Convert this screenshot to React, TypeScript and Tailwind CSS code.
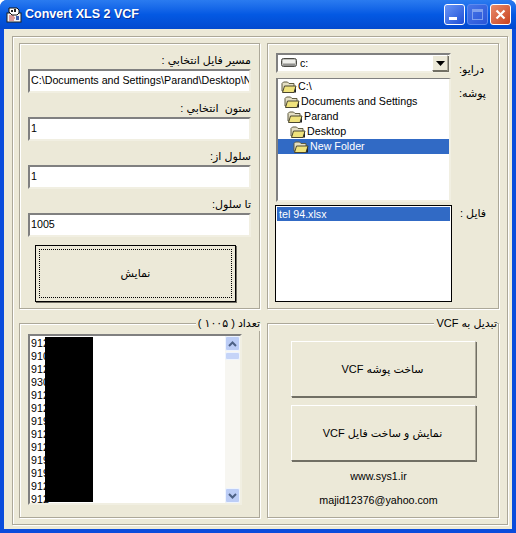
import React from 'react';

const sunken = 'border-2 border-t-[#808080] border-l-[#808080] border-b-[#F1EFE2] border-r-[#F1EFE2] bg-white';
const raised = 'border border-t-white border-l-white border-b-[#716F64] border-r-[#ACA899] shadow-[1px_1px_0_#716F64] bg-[#ECE9D8]';
const groove = 'border border-[#ACA899] shadow-[inset_1px_1px_0_#fff,1px_1px_0_#fff]';

const folders = [
  { name: 'C:\\', depth: 0 },
  { name: 'Documents and Settings', depth: 1 },
  { name: 'Parand', depth: 2 },
  { name: 'Desktop', depth: 3 },
  { name: 'New Folder', depth: 4, selected: true },
];

const numbers = ['912', '910', '912', '930', '912', '912', '919', '912', '912', '919', '919', '912', '912'];

function FolderIcon() {
  return (
    <svg width="16" height="14" viewBox="0 0 16 14" className="shrink-0">
      <path d="M1 11V3.500L2.500 2h4L8 3.500h5V11z" fill="#E4DFC4" stroke="#5F5B40" />
      <path d="M1.500 12.500L3.500 6h11.500l-2 6.500z" fill="#EFE27C" stroke="#4A4630" />
      <path d="M13 12.500L15 6.500V12.500z" fill="#222" />
    </svg>
  );
}

function DriveIcon() {
  return (
    <svg width="16" height="10" viewBox="0 0 16 10" className="shrink-0">
      <rect x="0.500" y="0.500" width="15" height="8" rx="2" fill="#BDBDB8" stroke="#4A4A45" />
      <rect x="2" y="2" width="12" height="3" fill="#EEEEEA" />
      <rect x="2" y="6.500" width="12" height="1" fill="#666" />
    </svg>
  );
}

function AppIcon() {
  return (
    <svg width="16" height="16" viewBox="0 0 16 16" className="shrink-0">
      <rect x="1" y="6" width="14" height="9" fill="#F4F4F4" stroke="#222" />
      <path d="M3 9h5M3 11h6M3 13h5" stroke="#C04040" />
      <path d="M10 9h3v4h-3z" fill="#4060B0" />
      <path d="M3 1h8l2 2v3l-2 2H6L3 5z" fill="#FFFFFF" stroke="#111" />
      <path d="M5 3h2v2H5zM8 2h2v3H8z" fill="#222" />
    </svg>
  );
}

function ScrollButton({ down = false }: { down?: boolean }) {
  return (
    <div className="h-[15px] w-[15px] rounded-[2px] border border-[#EEF4FE] bg-[#BCCDF6] flex items-center justify-center">
      <svg width="9" height="6" viewBox="0 0 9 6">
        <path d={down ? 'M1 1l3.500 3.500L8 1' : 'M1 5l3.500-3.500L8 5'} fill="none" stroke="#4D6185" strokeWidth="2" />
      </svg>
    </div>
  );
}

function Field({ label, value }: { label: string; value: string }) {
  return (
    <>
      <div dir="rtl" className="h-[16px] w-[223px] leading-[15px] text-[11px] whitespace-pre">{label}</div>
      <div className={`${sunken} h-[24px] w-[223px] mb-[8px] pl-[1px] leading-[19px] overflow-hidden whitespace-nowrap`}>
        {value}
      </div>
    </>
  );
}

function SideLabel({ text }: { text: string }) {
  return <div dir="rtl" className="w-[29px] ml-[8px] leading-[16px] text-[11px] text-left">{text}</div>;
}

export default function App() {
  return (
    <div className="w-[516px] h-[533px] bg-[#0A4CDC] rounded-t-[7px] overflow-hidden text-[10.700px] text-black [font-family:'Liberation_Sans','DejaVu_Sans',sans-serif]">
      {/* title bar */}
      <div className="h-[29px] flex items-center pl-[6px] pr-[5px] bg-gradient-to-b from-[#2A7BF0] via-[#0459E3] to-[#0249CF]">
        <AppIcon />
        <span className="ml-[3px] text-white font-bold text-[12.500px] [text-shadow:1px_1px_0_#0A2F9A]">
          Convert XLS 2 VCF
        </span>
        <div className="ml-auto flex gap-[2px]">
          <div className="w-[21px] h-[21px] rounded-[3px] border border-white bg-gradient-to-br from-[#6A95F5] to-[#1F4DD6] flex items-end pl-[4px] pb-[4px]">
            <div className="w-[8px] h-[3px] bg-white" />
          </div>
          <div className="w-[21px] h-[21px] rounded-[3px] border border-[#5C8BF0] bg-gradient-to-br from-[#4876E8] to-[#2A55D8] flex items-center justify-center">
            <div className="w-[11px] h-[11px] border border-[#7FA0EE] border-t-[3px]" />
          </div>
          <div className="w-[21px] h-[21px] rounded-[3px] border border-white bg-gradient-to-br from-[#E88A6A] to-[#C8411C] flex items-center justify-center">
            <svg width="11" height="11" viewBox="0 0 11 11">
              <path d="M1.500 1.500l8 8M9.500 1.500l-8 8" stroke="#fff" strokeWidth="2.200" />
            </svg>
          </div>
        </div>
      </div>

      {/* client area */}
      <div className="mx-[4px] h-[500px] bg-[#ECE9D8] pl-[8px] pr-[4px] pt-[7px]">
        <div className={`${groove} w-[496px] h-[489px] pl-[6px] pt-[6px] grid grid-cols-[241px_232px] grid-rows-[266px_195px] gap-x-[7px] gap-y-[14px]`}>
          {/* selected file settings */}
          <div className={`${groove} pl-[8px] pt-[9px]`}>
            <Field label="مسير فايل انتخابي :" value="C:\Documents and Settings\Parand\Desktop\New Folder" />
            <Field label="ستون  انتخابي :" value="1" />
            <Field label="سلول از:" value="1" />
            <Field label="تا سلول:" value="1005" />
            <button className="ml-[7px] w-[201px] h-[57px] border border-black shadow-[1px_1px_0_#716F64] bg-[#ECE9D8] p-[3px]">
              <span className="h-full flex items-center justify-center border border-dotted border-black text-[11px]">نمايش</span>
            </button>
          </div>

          {/* drive, folder and file pickers */}
          <div className={`${groove} pl-[8px] pt-[9px]`}>
            <div className="flex items-start h-[20px]">
              <div className={`${sunken} w-[175px] h-[20px] flex items-center pl-[3px] pr-[1px]`}>
                <DriveIcon />
                <span className="ml-[3px]">c:</span>
                <div className={`${raised} ml-auto w-[16px] h-[16px] flex items-center justify-center`}>
                  <svg width="9" height="5" viewBox="0 0 9 5"><path d="M0 0h9L4.500 5z" fill="#000" /></svg>
                </div>
              </div>
              <div className="pt-[8px]"><SideLabel text="درايو:" /></div>
            </div>
            <div className="flex items-start mt-[5px]">
              <div className="w-[175px] h-[124px] bg-white border-t border-l-2 border-r-2 border-b-2 border-t-[#808080] border-l-[#808080] border-b-[#F1EFE2] border-r-[#F1EFE2]">
                {folders.map((folder) => (
                  <div
                    key={folder.name}
                    className={`h-[15px] flex items-center leading-[15px] whitespace-nowrap ${folder.selected ? 'bg-[#316AC5] text-white' : ''}`}
                    style={{ paddingLeft: 3 + folder.depth * 3 }}
                  >
                    <FolderIcon />
                    <span className="ml-[1px]">{folder.name}</span>
                  </div>
                ))}
              </div>
              <div className="pt-[7px]"><SideLabel text="پوشه:" /></div>
            </div>
            <div className="flex items-start mt-[3px] -ml-[1px]">
              <div className="w-[177px] h-[97px] bg-white border border-black p-[1px]">
                <div className="h-[14px] bg-[#316AC5] text-white pl-[2px] leading-[14px]">tel 94.xlsx</div>
              </div>
              <SideLabel text="فايل :" />
            </div>
          </div>

          {/* number list */}
          <div className={`${groove} relative pl-[8px] pt-[10px]`}>
            <span dir="rtl" className="absolute -top-[9px] right-[-1px] bg-[#ECE9D8] pl-[2px] leading-[16px] text-[11px]">تعداد ( ۱۰۰۵ )</span>
            <div className={`${sunken} relative w-[214px] h-[171px] flex justify-between overflow-hidden`}>
              <div className="pl-[1px] pt-[1px]">
                {numbers.map((n, i) => (
                  <div key={i} className="h-[13px] leading-[13px]">{n}</div>
                ))}
              </div>
              <div className="absolute left-[15px] top-[1px] w-[48px] h-[165px] bg-black" />
              <div className="w-[15px] h-full bg-[#F7F6F1] flex flex-col justify-between">
                <div>
                  <ScrollButton />
                  <div className="mt-[1px] h-[8px] w-[15px] rounded-[2px] border border-[#EEF4FE] bg-[#C5D4F8]" />
                </div>
                <ScrollButton down />
              </div>
            </div>
          </div>

          {/* convert to VCF */}
          <div className={`${groove} relative pl-[23px] pt-[17px]`}>
            <span dir="rtl" className="absolute -top-[9px] right-[1px] bg-[#ECE9D8] pl-[2px] leading-[16px] text-[11px]">تبديل به VCF</span>
            <button dir="rtl" className={`${raised} block w-[185px] h-[56px] text-[11px] pr-[2px]`}>ساخت پوشه VCF</button>
            <button dir="rtl" className={`${raised} block w-[185px] h-[56px] mt-[8px] text-[11px] pr-[2px]`}>نمايش و ساخت فايل VCF</button>
            <div className="w-[175px] text-center mt-[7px] leading-[16px]">www.sys1.ir</div>
            <div className="w-[175px] text-center mt-[8px] leading-[16px]">majid12376@yahoo.com</div>
          </div>
        </div>
      </div>
    </div>
  );
}
